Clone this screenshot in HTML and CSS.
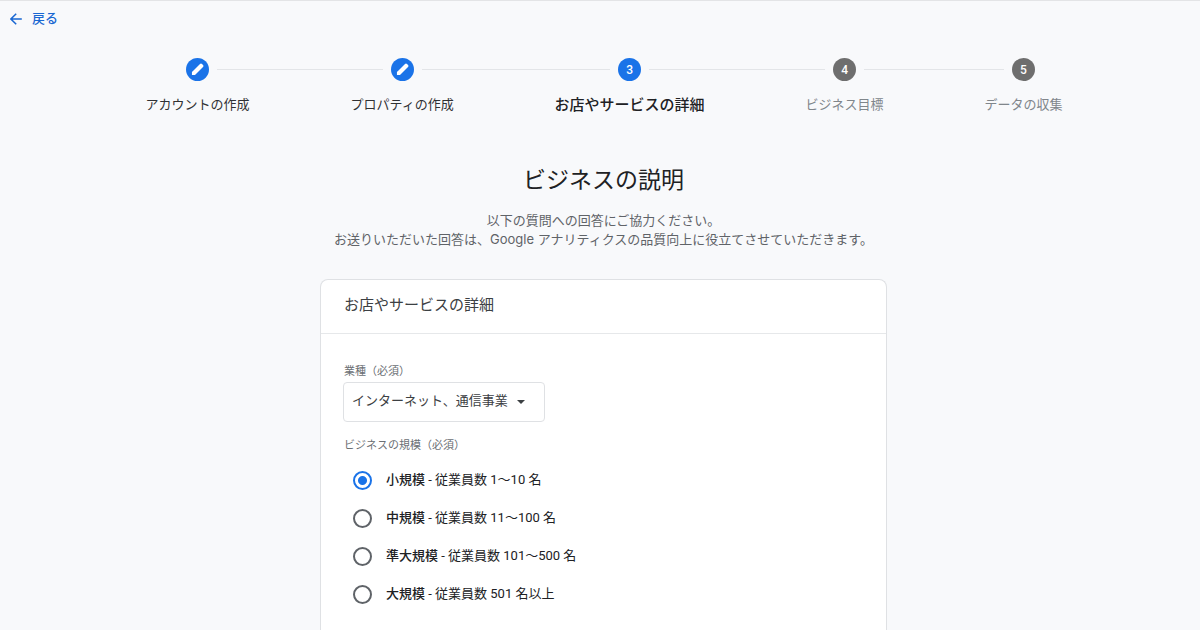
FILE: index.html
```html
<!DOCTYPE html>
<html lang="ja">
<head>
<meta charset="utf-8">
<meta name="viewport" content="width=device-width, initial-scale=1">
<title>ビジネスの説明</title>
<link rel="stylesheet" href="styles.css">
</head>
<body>
<header class="topbar">
  <a class="back" href="#">
    <svg class="back-icon" viewBox="0 0 12 12" aria-hidden="true"><path d="M11.8 6H1.2M6.2.7.9 6l5.300 5.300" fill="none" stroke="currentColor" stroke-width="1.5"/></svg>
    <span>戻る</span>
  </a>
</header>
<main class="page">
  <ol class="stepper">
    <li class="step">
      <div class="track"><span class="badge"><svg viewBox="0 0 24 24" aria-hidden="true"><path d="M5 19v-3.800L15.200 5a1.800 1.800 0 0 1 2.500 0l1.300 1.300a1.800 1.800 0 0 1 0 2.500L8.800 19z"/></svg></span></div>
      <span class="step-label">アカウントの作成</span>
    </li>
    <li class="step">
      <div class="track"><span class="badge"><svg viewBox="0 0 24 24" aria-hidden="true"><path d="M5 19v-3.800L15.200 5a1.800 1.800 0 0 1 2.500 0l1.300 1.300a1.800 1.800 0 0 1 0 2.500L8.800 19z"/></svg></span></div>
      <span class="step-label">プロパティの作成</span>
    </li>
    <li class="step current" aria-current="step">
      <div class="track"><span class="badge">3</span></div>
      <span class="step-label">お店やサービスの詳細</span>
    </li>
    <li class="step upcoming">
      <div class="track"><span class="badge">4</span></div>
      <span class="step-label">ビジネス目標</span>
    </li>
    <li class="step upcoming">
      <div class="track"><span class="badge">5</span></div>
      <span class="step-label">データの収集</span>
    </li>
  </ol>
  <section class="intro">
    <h1>ビジネスの説明</h1>
    <p>以下の質問への回答にご協力ください。<br>お送りいただいた回答は、Google アナリティクスの品質向上に役立てさせていただきます。</p>
  </section>
  <form class="card">
    <h2 class="card-title">お店やサービスの詳細</h2>
    <div class="card-body">
      <label class="field-label" for="industry">業種（必須）</label>
      <div class="select-wrap">
        <select class="select" id="industry">
          <option>インターネット、通信事業</option>
        </select>
        <svg class="caret" viewBox="0 0 8 4" aria-hidden="true"><path d="M0 0h8L4 4z"/></svg>
      </div>
      <fieldset class="sizes">
        <legend class="field-label">ビジネスの規模（必須）</legend>
        <label class="option"><input type="radio" name="size" checked><span><b>小規模</b> - 従業員数 1～10 名</span></label>
        <label class="option"><input type="radio" name="size"><span><b>中規模</b> - 従業員数 11～100 名</span></label>
        <label class="option"><input type="radio" name="size"><span><b>準大規模</b> - 従業員数 101～500 名</span></label>
        <label class="option"><input type="radio" name="size"><span><b>大規模</b> - 従業員数 501 名以上</span></label>
      </fieldset>
    </div>
  </form>
</main>
</body>
</html>
```
FILE: styles.css
```css
* { box-sizing: border-box; }
body {
  margin: 0;
  background: #f8f9fb;
  color: #202124;
  font: 13px/20px Roboto, "Noto Sans CJK JP", sans-serif;
}
.topbar {
  border-top: 1px solid #e3e4e6;
  padding: 8px 10px 0;
}
.back {
  display: inline-flex;
  align-items: center;
  gap: 10px;
  color: #1967d2;
  font-weight: 500;
  text-decoration: none;
}
.back-icon { width: 12px; height: 12px; }
.page { padding-left: 7px; }
.stepper {
  display: flex;
  margin: 0;
  padding: 27px 87px 0 88px;
  list-style: none;
}
.step {
  flex: 1 1 auto;
  display: flex;
  flex-direction: column;
  gap: 14px;
  text-align: center;
}
.step-label { padding: 0 48px; color: #303134; white-space: nowrap; }
.track { display: flex; align-items: center; gap: 8px; }
.track::before, .track::after {
  content: "";
  flex: 1;
  height: 1px;
  background: #e3e5e8;
}
.step:first-child .track::before,
.step:last-child .track::after { background: none; }
.badge {
  display: flex;
  align-items: center;
  justify-content: center;
  width: 23px;
  height: 23px;
  border-radius: 50%;
  background: #1a73e8;
  color: #fff;
  font-size: 12px;
  font-weight: 500;
}
.badge svg { width: 19px; height: 19px; fill: #fff; }
.current .step-label { color: #202124; font-size: 15px; font-weight: 500; }
.upcoming .badge { background: #6e6e6e; }
.upcoming .step-label { color: #80868b; }
.intro { padding: 50px 16px 0; text-align: center; }
.intro h1 {
  margin: 0;
  font-size: 23px;
  font-weight: 400;
  line-height: 32px;
}
.intro p {
  margin: 14px 0 0;
  color: #5f6368;
  font-family: Inter, "Noto Sans CJK JP", sans-serif;
  line-height: 19px;
}
.card {
  max-width: 567px;
  margin: 30px auto 0;
  border: 1px solid #dfe1e4;
  border-bottom: 0;
  border-radius: 8px 8px 0 0;
  background: #fff;
}
.card-title {
  margin: 0;
  padding: 13px 23px 16px;
  border-bottom: 1px solid #e6e8ea;
  color: #3c4043;
  font-size: 15px;
  font-weight: 400;
  line-height: 24px;
}
.card-body { padding: 30px 22px 18px; }
.field-label {
  display: block;
  padding: 0 1px;
  color: #6b6f74;
  font-size: 11px;
  line-height: 16px;
}
.select-wrap {
  position: relative;
  width: 202px;
  margin: 2px 0 16px;
}
.select {
  display: block;
  width: 100%;
  height: 40px;
  padding: 0 24px 2px 8px;
  border: 1px solid #dfe1e4;
  border-radius: 4px;
  appearance: none;
  background: #fff;
  color: #3c4043;
  font: inherit;
}
.caret {
  position: absolute;
  top: 18px;
  right: 20px;
  width: 8px;
  height: 4px;
  fill: #3c4043;
  pointer-events: none;
}
.sizes { margin: 0; padding: 0; border: 0; }
.sizes .field-label { margin-bottom: 7px; }
.option {
  display: flex;
  align-items: center;
  gap: 14px;
  height: 38px;
  padding-left: 10px;
}
.option b { font-weight: 500; }
.option input {
  width: 19px;
  height: 19px;
  margin: 0;
  border: 2px solid #5f6368;
  border-radius: 50%;
  appearance: none;
}
.option input:checked {
  border-color: #1a73e8;
  background: radial-gradient(circle, #1a73e8 4px, transparent 5px);
}
```
